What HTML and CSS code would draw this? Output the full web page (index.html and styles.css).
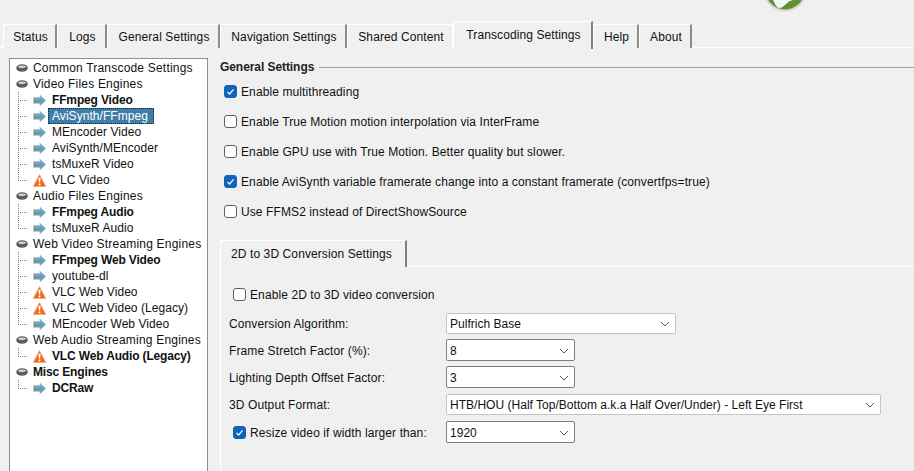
FILE: index.html
```html
<!DOCTYPE html>
<html lang="en">
<head>
<meta charset="utf-8">
<title>Transcoding Settings</title>
<link rel="stylesheet" href="styles.css">
</head>
<body>
<svg width="0" height="0" class="defs">
  <defs>
    <symbol id="arrow" viewBox="0 0 13 13">
      <path d="M.5 3.500H7V1L12.800 6.500 7 12V9.500H.5z" fill="#6a9bb1" stroke="#b5c5cd" stroke-width=".8"/>
      <path d="M1 4.800h7V3L10.500 5.800" fill="none" stroke="#86b0c3" stroke-width="1"/>
    </symbol>
    <symbol id="warn" viewBox="0 0 13 13">
      <path d="M6.500 .6 12.800 12.500H.2z" fill="#ea6a1c" stroke="#f4ae7e" stroke-width=".8"/>
      <path d="M5.500 3.800h2l-.4 4.800H5.900zM5.600 9.400h1.800v1.800H5.600z" fill="#fff"/>
    </symbol>
    <symbol id="pill" viewBox="0 0 12 8">
      <ellipse cx="6" cy="4" rx="5.800" ry="3.800" fill="#5c5c5c"/>
      <ellipse cx="6" cy="2.800" rx="3.800" ry="1.400" fill="#cfcfcf"/>
    </symbol>
    <symbol id="chev" viewBox="0 0 10 6">
      <path d="M1 1l4 4 4-4" fill="none" stroke="#555" stroke-width="1"/>
    </symbol>
    <symbol id="tick" viewBox="0 0 13 13">
      <path d="M3.400 6.800 5.600 9l4-4.600" fill="none" stroke="#fff" stroke-width="1.200"/>
    </symbol>
  </defs>
</svg>

<div class="app">
  <header class="top">
    <svg class="logo" width="44" height="12" viewBox="0 0 44 12">
      <circle cx="22" cy="-10" r="21.500" fill="#d4d4d4"/>
      <circle cx="22" cy="-10" r="19.500" fill="#5f9130"/>
      <path d="M10 0h20l-4 1.500-7 6-4 .6-2.500-3z" fill="#f5f5f5"/>
    </svg>
  </header>

  <nav class="tabs">
    <div class="tab w-status">Status</div>
    <div class="tab w-logs">Logs</div>
    <div class="tab w-general">General Settings</div>
    <div class="tab w-nav">Navigation Settings</div>
    <div class="tab w-shared">Shared Content</div>
    <div class="tab active w-trans">Transcoding Settings</div>
    <div class="tab w-help">Help</div>
    <div class="tab w-about">About</div>
  </nav>

  <main class="main">
    <aside class="tree">
      <div class="node"><svg class="ic-pill"><use href="#pill"/></svg><span>Common Transcode Settings</span></div>
      <div class="node"><svg class="ic-pill"><use href="#pill"/></svg><span>Video Files Engines</span></div>
      <div class="leaf"><i class="elbow"></i><svg class="ic"><use href="#arrow"/></svg><b>FFmpeg Video</b></div>
      <div class="leaf"><i class="elbow"></i><svg class="ic"><use href="#arrow"/></svg><span class="sel">AviSynth/FFmpeg</span></div>
      <div class="leaf"><i class="elbow"></i><svg class="ic"><use href="#arrow"/></svg><span>MEncoder Video</span></div>
      <div class="leaf"><i class="elbow"></i><svg class="ic"><use href="#arrow"/></svg><span>AviSynth/MEncoder</span></div>
      <div class="leaf"><i class="elbow"></i><svg class="ic"><use href="#arrow"/></svg><span>tsMuxeR Video</span></div>
      <div class="leaf"><i class="elbow last"></i><svg class="ic"><use href="#warn"/></svg><span>VLC Video</span></div>
      <div class="node"><svg class="ic-pill"><use href="#pill"/></svg><span>Audio Files Engines</span></div>
      <div class="leaf"><i class="elbow"></i><svg class="ic"><use href="#arrow"/></svg><b>FFmpeg Audio</b></div>
      <div class="leaf"><i class="elbow last"></i><svg class="ic"><use href="#arrow"/></svg><span>tsMuxeR Audio</span></div>
      <div class="node"><svg class="ic-pill"><use href="#pill"/></svg><span>Web Video Streaming Engines</span></div>
      <div class="leaf"><i class="elbow"></i><svg class="ic"><use href="#arrow"/></svg><b>FFmpeg Web Video</b></div>
      <div class="leaf"><i class="elbow"></i><svg class="ic"><use href="#arrow"/></svg><span>youtube-dl</span></div>
      <div class="leaf"><i class="elbow"></i><svg class="ic"><use href="#warn"/></svg><span>VLC Web Video</span></div>
      <div class="leaf"><i class="elbow"></i><svg class="ic"><use href="#warn"/></svg><span>VLC Web Video (Legacy)</span></div>
      <div class="leaf"><i class="elbow last"></i><svg class="ic"><use href="#arrow"/></svg><span>MEncoder Web Video</span></div>
      <div class="node"><svg class="ic-pill"><use href="#pill"/></svg><span>Web Audio Streaming Engines</span></div>
      <div class="leaf"><i class="elbow last"></i><svg class="ic"><use href="#warn"/></svg><b>VLC Web Audio (Legacy)</b></div>
      <div class="node"><svg class="ic-pill"><use href="#pill"/></svg><b>Misc Engines</b></div>
      <div class="leaf"><i class="elbow last"></i><svg class="ic"><use href="#arrow"/></svg><b>DCRaw</b></div>
    </aside>

    <section class="panel">
      <div class="legend"><b>General Settings</b><hr class="rule"></div>
      <div class="options">
        <label class="opt"><span class="check on"><svg><use href="#tick"/></svg></span>Enable multithreading</label>
        <label class="opt"><span class="check"></span>Enable True Motion motion interpolation via InterFrame</label>
        <label class="opt"><span class="check"></span>Enable GPU use with True Motion. Better quality but slower.</label>
        <label class="opt"><span class="check on"><svg><use href="#tick"/></svg></span>Enable AviSynth variable framerate change into a constant framerate (convertfps=true)</label>
        <label class="opt"><span class="check"></span>Use FFMS2 instead of DirectShowSource</label>
      </div>

      <div class="subtabs"><div class="subtab">2D to 3D Conversion Settings</div></div>
      <div class="subpanel">
        <label class="opt enable"><span class="check"></span>Enable 2D to 3D video conversion</label>
        <div class="form">
          <div class="flabel">Conversion Algorithm:</div>
          <div class="combo flat w-algo"><span>Pulfrich Base</span><svg class="chev"><use href="#chev"/></svg></div>
          <div class="flabel">Frame Stretch Factor (%):</div>
          <div class="combo edit"><span>8</span><svg class="chev"><use href="#chev"/></svg></div>
          <div class="flabel">Lighting Depth Offset Factor:</div>
          <div class="combo edit"><span>3</span><svg class="chev"><use href="#chev"/></svg></div>
          <div class="flabel">3D Output Format:</div>
          <div class="combo flat w-format"><span>HTB/HOU (Half Top/Bottom a.k.a Half Over/Under) - Left Eye First</span><svg class="chev"><use href="#chev"/></svg></div>
          <label class="opt resize"><span class="check on"><svg><use href="#tick"/></svg></span>Resize video if width larger than:</label>
          <div class="combo edit"><span>1920</span><svg class="chev"><use href="#chev"/></svg></div>
        </div>
      </div>
    </section>
  </main>
</div>
</body>
</html>
```
FILE: styles.css
```css
* { box-sizing: border-box; }
html, body { margin: 0; height: 471px; overflow: hidden; }
body {
  background: #f0f0f0;
  color: #111;
  font: 12px/16px "Liberation Sans", Arial, sans-serif;
  letter-spacing: .1px;
}
.defs { position: absolute; }
.app { display: flex; flex-direction: column; height: 471px; }

.top { height: 24px; position: relative; flex: none; }
.logo { position: absolute; left: 763px; top: 0; }

.tabs {
  display: flex;
  align-items: flex-end;
  height: 24px;
  padding-left: 3px;
  border-bottom: 1px solid #fff;
  flex: none;
}
.tab {
  height: 24px;
  padding: 4px 0 0 2px;
  text-align: center;
  border-top: 1px solid #fff;
  border-left: 1px solid #fff;
  border-right: 2px solid #8c8c8c;
  margin-bottom: -1px;
  background: #f0f0f0;
}
.tab.active {
  height: 28px;
  padding-top: 5px;
  margin-bottom: -2px;
  border-right-color: #7f7f7f;
}
.w-status { width: 54px; }
.w-logs { width: 50px; }
.w-general { width: 113px; }
.w-nav { width: 127px; }
.w-shared { width: 106px; border-right: 1px solid #fff; }
.w-trans { width: 140px; }
.w-help { width: 46px; }
.w-about { width: 53px; }

.main { flex: 1; display: flex; align-items: stretch; padding: 10px 0 0 9px; min-height: 0; }

.tree {
  width: 199px;
  flex: none;
  background: #fff;
  border: 1px solid #8f8f93;
  border-bottom: 0;
  padding: 1px 0 0 0;
  letter-spacing: .05px;
}
.tree b { letter-spacing: -.15px; }
.node, .leaf { display: flex; align-items: center; height: 16px; white-space: nowrap; }
.node { padding-left: 6px; letter-spacing: .2px; }
.ic-pill { width: 12px; height: 8px; margin-right: 5px; flex: none; }
.leaf { padding-left: 8px; }
.elbow {
  width: 10px;
  height: 16px;
  flex: none;
  margin-right: 5px;
  background:
    repeating-linear-gradient(to bottom, #777 0 1px, transparent 1px 2px) left top / 1px 100% no-repeat,
    repeating-linear-gradient(to right, #777 0 1px, transparent 1px 2px) left 8px / 100% 1px no-repeat;
}
.elbow.last {
  background:
    repeating-linear-gradient(to bottom, #777 0 1px, transparent 1px 2px) left top / 1px 9px no-repeat,
    repeating-linear-gradient(to right, #777 0 1px, transparent 1px 2px) left 8px / 100% 1px no-repeat;
}
.ic { width: 13px; height: 13px; margin-right: 6px; flex: none; }
.sel {
  background: #3f7ea8;
  color: #fff;
  outline: 1px dotted #123;
  outline-offset: -1px;
  margin-left: -4px;
  padding: 0 6px 0 4px;
}

.panel { flex: 1; min-width: 0; display: flex; flex-direction: column; padding: 0 0 0 12px; }
.legend { display: flex; align-items: center; gap: 5px; height: 16px; margin-top: 1px; }
.legend b { color: #222; white-space: nowrap; letter-spacing: -.07px; }
.rule { flex: 1; margin: 0; border: 0; border-top: 1px solid #a0a0a0; }

.options { display: flex; flex-direction: column; gap: 14px; padding: 8px 0 0 4px; }
.opt { display: flex; align-items: center; height: 16px; gap: 4px; white-space: nowrap; padding-top: 2px; }
.check {
  width: 13px;
  height: 13px;
  flex: none;
  margin-top: -2px;
  background: #fff;
  border: 1px solid #5f5f5f;
  border-radius: 3px;
}
.check.on { background: #0f64b9; border-color: #0f64b9; }
.check svg { display: block; width: 13px; height: 13px; margin: -1px; }

.subtabs { margin-top: 21px; height: 27px; border-bottom: 1px solid #fff; display: flex; }
.subtab {
  width: 187px;
  height: 27px;
  padding: 5px 0 0 10px;
  border-top: 1px solid #fff;
  border-left: 1px solid #fff;
  border-right: 2px solid #7f7f7f;
  background: #f0f0f0;
  flex: none;
}
.subpanel { flex: 1; border-left: 1px solid #fff; padding: 19px 0 0 8px; }
.enable { margin-left: 4px; }
.form {
  display: grid;
  grid-template-columns: 217px auto;
  justify-content: start;
  justify-items: start;
  align-items: center;
  row-gap: 5px;
  padding-top: 11px;
}
.flabel { padding-top: 1px; }
.resize { margin-left: 4px; }
.combo {
  display: flex;
  align-items: center;
  justify-content: space-between;
  height: 21px;
  background: #fff;
  border: 1px solid #c4c4c4;
  border-radius: 2px;
  padding: 1px 5px 0 3px;
  white-space: nowrap;
  letter-spacing: .02px;
}
.edit { width: 129px; height: 22px; border-color: #7e7e7e; }
.w-algo { width: 230px; }
.w-format { width: 435px; margin: 1px 0; }
.chev { width: 10px; height: 6px; flex: none; }
```
